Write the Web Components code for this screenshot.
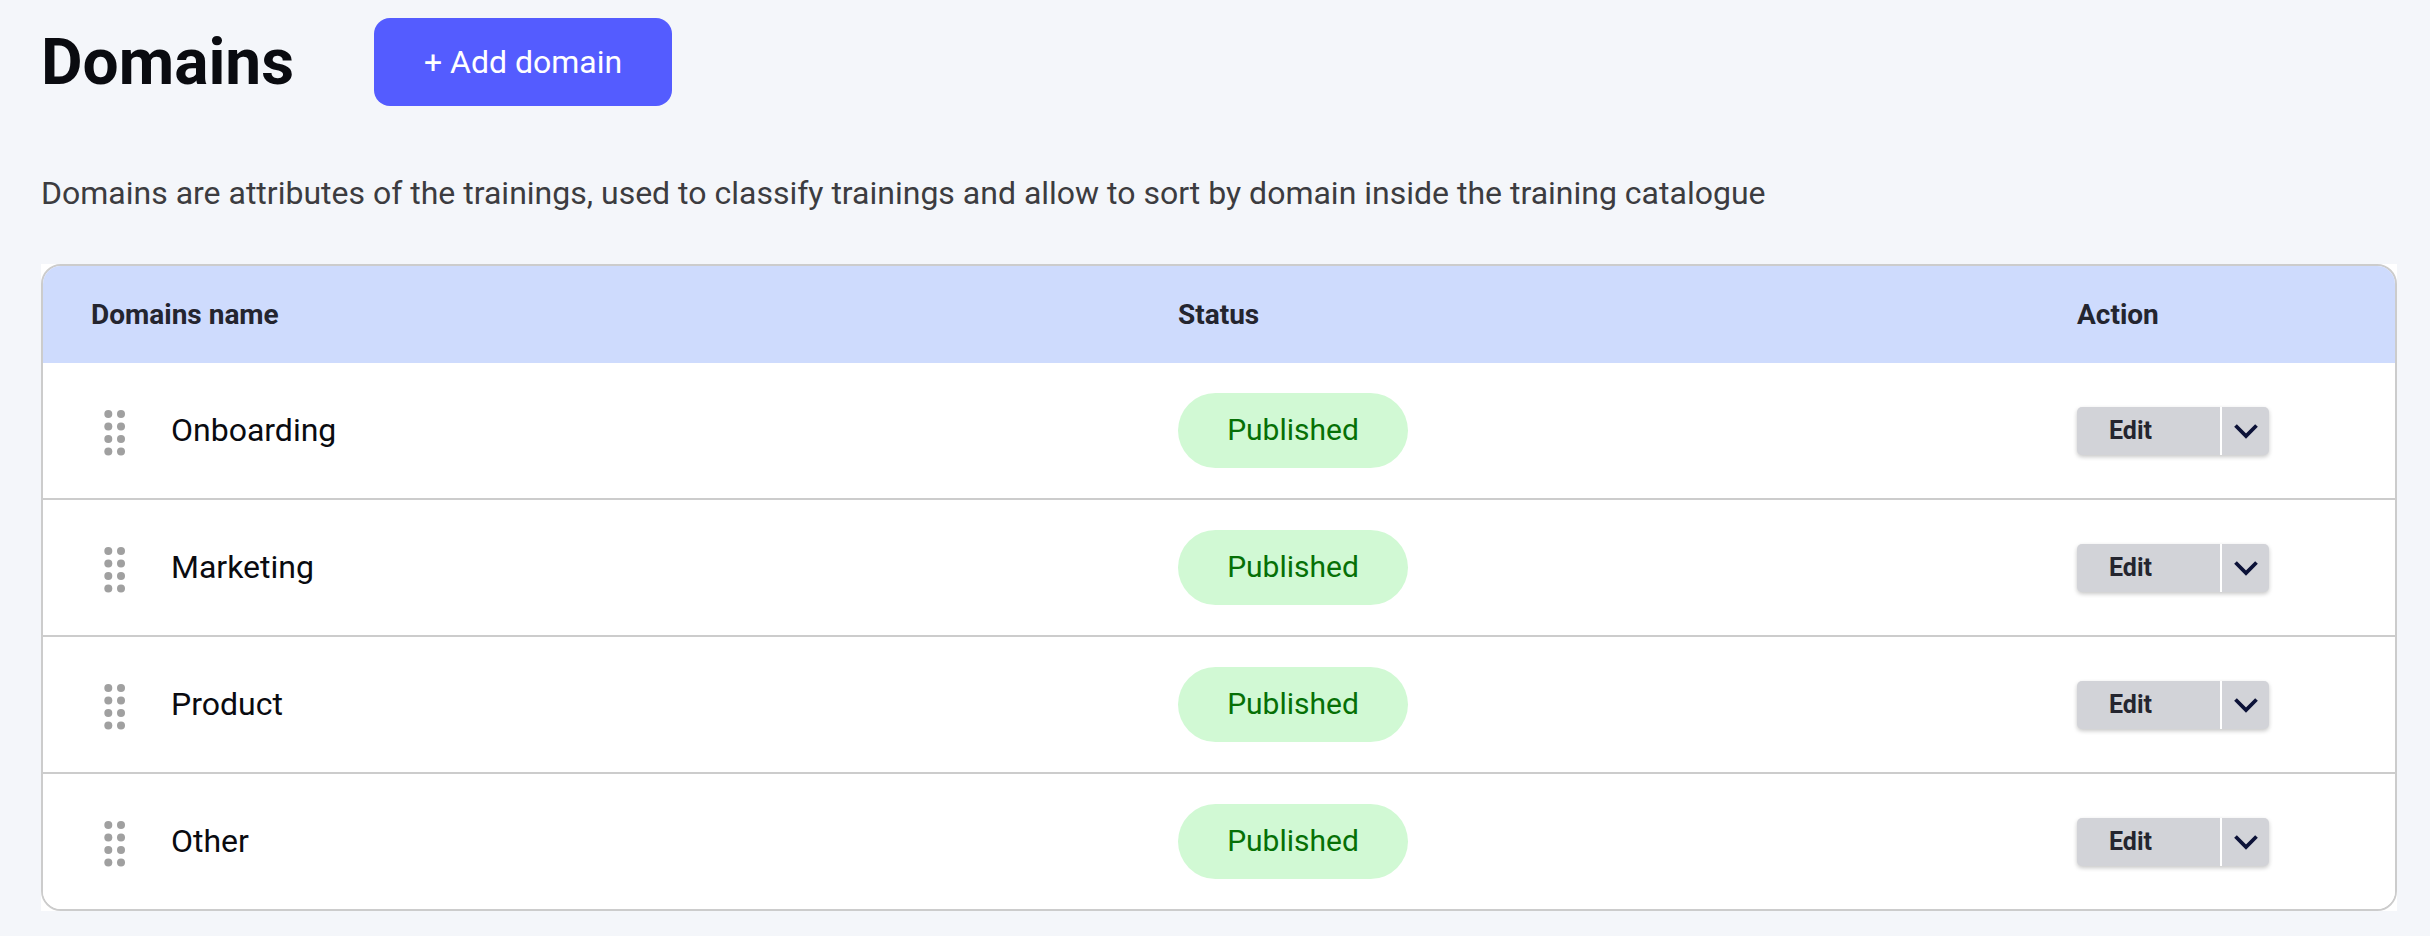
<!DOCTYPE html>
<html lang="en">
<head>
<meta charset="utf-8">
<title>Domains</title>
<style>
  html, body { margin: 0; background: #f4f6fa; }
  body { font-family: Roboto, "Liberation Sans", sans-serif; }
</style>
</head>
<body>
<domains-page>
  <page-head slot="head" label="+ Add domain">Domains</page-head>
  <span slot="intro">Domains are attributes of the trainings, used to classify trainings and allow to sort by domain inside the training catalogue</span>
  <domain-table>
    <domain-row>Onboarding</domain-row>
    <domain-row>Marketing</domain-row>
    <domain-row>Product</domain-row>
    <domain-row>Other</domain-row>
  </domain-table>
</domains-page>

<script>
class DomainsPage extends HTMLElement {
  constructor() {
    super();
    this.attachShadow({ mode: 'open' }).innerHTML = `
      <style>
        :host { display: block; height: 936px; box-sizing: border-box; padding: 18px 33px 0 41px; overflow: hidden; }
        p {
          margin: 65px 0 49px;
          font-size: 32px;
          line-height: 44px;
          color: #3c3c40;
        }
      </style>
      <slot name="head"></slot>
      <p><slot name="intro"></slot></p>
      <slot></slot>`;
  }
}

class PageHead extends HTMLElement {
  constructor() {
    super();
    this.attachShadow({ mode: 'open' }).innerHTML = `
      <style>
        :host { display: flex; align-items: center; gap: 80px; }
        h1 { margin: 0; padding-top: 2px; font-size: 64px; line-height: 86px; font-weight: 700; color: #0a0b10; }
        button {
          width: 298px;
          height: 88px;
          border: 0;
          border-radius: 16px;
          background: #545cff;
          color: #fff;
          font: 400 32px Roboto, "Liberation Sans", sans-serif;
        }
      </style>
      <h1><slot></slot></h1>
      <button type="button"></button>`;
    this.shadowRoot.querySelector('button').textContent = this.getAttribute('label');
  }
}

class DomainTable extends HTMLElement {
  constructor() {
    super();
    this.attachShadow({ mode: 'open' }).innerHTML = `
      <style>
        :host { display: block; background: #fff; }
        .frame { border: 2px solid #cccccc; border-radius: 20px; overflow: hidden; }
        .head {
          display: grid;
          grid-template-columns: 1087px 899px 1fr;
          align-items: center;
          height: 97px;
          padding-left: 48px;
          background: #cedbfd;
          font-size: 28px;
          font-weight: 700;
          color: #24252f;
        }
      </style>
      <div class="frame">
        <div class="head"><span>Domains name</span><span>Status</span><span>Action</span></div>
        <slot></slot>
      </div>`;
  }
}

class DomainRow extends HTMLElement {
  constructor() {
    super();
    this.attachShadow({ mode: 'open' }).innerHTML = `
      <style>
        :host {
          display: grid;
          grid-template-columns: 1087px 899px 1fr;
          align-items: center;
          height: 137px;
          box-sizing: border-box;
          padding-left: 48px;
          border-bottom: 2px solid #cccccc;
          background: #fff;
        }
        :host(:last-child) { border-bottom: 0; height: 135px; }
        .name { display: flex; align-items: center; gap: 44px; font-size: 32px; color: #0a0b10; }
        .name span { padding-bottom: 2px; }
      </style>
      <div class="name"><drag-handle></drag-handle><span><slot></slot></span></div>
      <status-pill>Published</status-pill>
      <edit-button>Edit</edit-button>`;
  }
}

class DragHandle extends HTMLElement {
  constructor() {
    super();
    this.attachShadow({ mode: 'open' }).innerHTML = `
      <style>
        :host { display: block; width: 36px; height: 50px; }
        svg { display: block; }
      </style>
      <svg width="36" height="50" viewBox="0 0 36 50" fill="#a0a0a0">
        <circle cx="17.3" cy="8" r="4"/><circle cx="30" cy="8" r="4"/>
        <circle cx="17.3" cy="20.5" r="4"/><circle cx="30" cy="20.5" r="4"/>
        <circle cx="17.3" cy="33" r="4"/><circle cx="30" cy="33" r="4"/>
        <circle cx="17.3" cy="45.5" r="4"/><circle cx="30" cy="45.5" r="4"/>
      </svg>`;
  }
}

class StatusPill extends HTMLElement {
  constructor() {
    super();
    this.attachShadow({ mode: 'open' }).innerHTML = `
      <style>
        :host {
          display: flex;
          align-items: center;
          justify-content: center;
          box-sizing: border-box;
          width: 230px;
          height: 75px;
          padding-bottom: 2px;
          border-radius: 38px;
          background: #d1f9d4;
          color: #067006;
          font-size: 30px;
        }
      </style>
      <slot></slot>`;
  }
}

class EditButton extends HTMLElement {
  constructor() {
    super();
    this.attachShadow({ mode: 'open' }).innerHTML = `
      <style>
        :host {
          display: flex;
          width: 192px;
          height: 48px;
          border-radius: 5px;
          background: #d2d3d8;
          box-shadow: 0 2px 4px rgba(0, 0, 0, .22);
          color: #24252f;
          font-size: 25px;
          font-weight: 700;
        }
        .label { display: flex; align-items: center; width: 111px; padding-left: 32px; box-sizing: content-box; border-right: 2px solid #fff; }
        .caret { flex: 1; display: flex; align-items: center; justify-content: center; }
        svg { display: block; }
      </style>
      <div class="label"><slot></slot></div>
      <div class="caret">
        <svg width="24" height="16" viewBox="0 0 24 16"><path d="M1.5 2.5L12 13L22.5 2.5" fill="none" stroke="#0c1238" stroke-width="3.8"/></svg>
      </div>`;
  }
}

customElements.define('domains-page', DomainsPage);
customElements.define('page-head', PageHead);
customElements.define('domain-table', DomainTable);
customElements.define('domain-row', DomainRow);
customElements.define('drag-handle', DragHandle);
customElements.define('status-pill', StatusPill);
customElements.define('edit-button', EditButton);
</script>
</body>
</html>
